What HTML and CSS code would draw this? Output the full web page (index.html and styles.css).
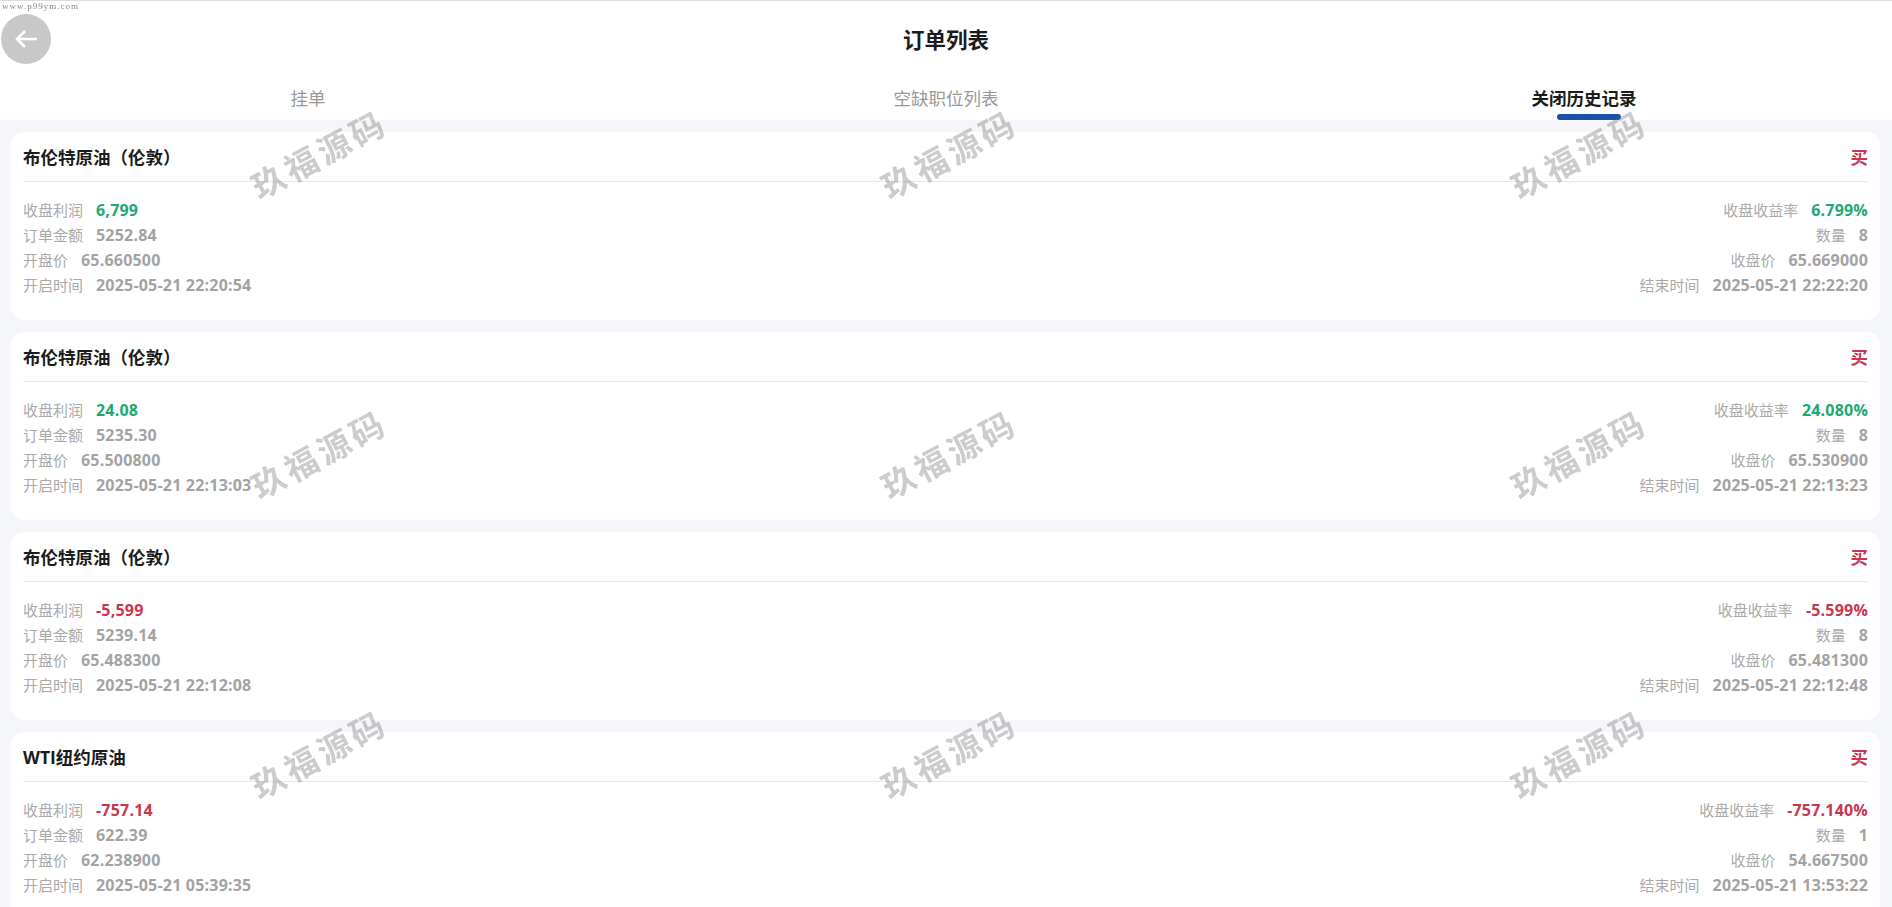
FILE: index.html
```html
<!DOCTYPE html>
<html lang="zh-CN">

<head>
  <meta charset="UTF-8">
  <title>订单列表</title>
  <link rel="stylesheet" href="styles.css">
</head>

<body>
  <div class="site-mark">www.p99ym.com</div>
  <header class="top">
    <div class="title-bar">
      <a class="back" href="#">
        <svg width="22" height="18" viewBox="0 0 22 18" fill="none" stroke="#fff" stroke-width="2.5">
          <path d="M22 9H2M10 1L2 9l8 8" />
        </svg>
      </a>
      <h1>订单列表</h1>
    </div>
    <nav class="tabs">
      <a href="#">挂单</a>
      <a href="#">空缺职位列表</a>
      <a href="#" class="active">关闭历史记录</a>
    </nav>
  </header>

  <main class="orders">
    <section class="order">
      <div class="order-head"><h3>布伦特原油（伦敦）</h3><span class="side">买</span></div>
      <div class="order-body">
        <div class="col">
          <p>收盘利润<b class="up">6,799</b></p>
          <p>订单金额<b>5252.84</b></p>
          <p>开盘价<b>65.660500</b></p>
          <p>开启时间<b>2025-05-21 22:20:54</b></p>
        </div>
        <div class="col right">
          <p>收盘收益率<b class="up">6.799%</b></p>
          <p>数量<b>8</b></p>
          <p>收盘价<b>65.669000</b></p>
          <p>结束时间<b>2025-05-21 22:22:20</b></p>
        </div>
      </div>
    </section>
    <section class="order">
      <div class="order-head"><h3>布伦特原油（伦敦）</h3><span class="side">买</span></div>
      <div class="order-body">
        <div class="col">
          <p>收盘利润<b class="up">24.08</b></p>
          <p>订单金额<b>5235.30</b></p>
          <p>开盘价<b>65.500800</b></p>
          <p>开启时间<b>2025-05-21 22:13:03</b></p>
        </div>
        <div class="col right">
          <p>收盘收益率<b class="up">24.080%</b></p>
          <p>数量<b>8</b></p>
          <p>收盘价<b>65.530900</b></p>
          <p>结束时间<b>2025-05-21 22:13:23</b></p>
        </div>
      </div>
    </section>
    <section class="order">
      <div class="order-head"><h3>布伦特原油（伦敦）</h3><span class="side">买</span></div>
      <div class="order-body">
        <div class="col">
          <p>收盘利润<b class="down">-5,599</b></p>
          <p>订单金额<b>5239.14</b></p>
          <p>开盘价<b>65.488300</b></p>
          <p>开启时间<b>2025-05-21 22:12:08</b></p>
        </div>
        <div class="col right">
          <p>收盘收益率<b class="down">-5.599%</b></p>
          <p>数量<b>8</b></p>
          <p>收盘价<b>65.481300</b></p>
          <p>结束时间<b>2025-05-21 22:12:48</b></p>
        </div>
      </div>
    </section>
    <section class="order">
      <div class="order-head"><h3>WTI纽约原油</h3><span class="side">买</span></div>
      <div class="order-body">
        <div class="col">
          <p>收盘利润<b class="down">-757.14</b></p>
          <p>订单金额<b>622.39</b></p>
          <p>开盘价<b>62.238900</b></p>
          <p>开启时间<b>2025-05-21 05:39:35</b></p>
        </div>
        <div class="col right">
          <p>收盘收益率<b class="down">-757.140%</b></p>
          <p>数量<b>1</b></p>
          <p>收盘价<b>54.667500</b></p>
          <p>结束时间<b>2025-05-21 13:53:22</b></p>
        </div>
      </div>
    </section>
  </main>

  <div class="watermarks">
    <span>玖福源码</span><span>玖福源码</span><span>玖福源码</span>
    <span>玖福源码</span><span>玖福源码</span><span>玖福源码</span>
    <span>玖福源码</span><span>玖福源码</span><span>玖福源码</span>
  </div>
</body>

</html>
```

FILE: styles.css
```css
html,
body {
  margin: 0;
  padding: 0;
  height: 100%;
  overflow: hidden;
  background-color: #f5f6fa;
  font-family: 'Open Sans', 'Noto Sans CJK SC', sans-serif;
  color: #1c1c1c;
}

.site-mark {
  position: absolute;
  top: 1px;
  left: 2px;
  font-family: 'Liberation Serif', serif;
  font-size: 9px;
  letter-spacing: 1px;
  color: #888;
  z-index: 3;
}

.top {
  height: 119px;
  background-color: #fff;
  border-top: 1px solid #ddd;
}

.title-bar {
  height: 74px;
  padding-bottom: 2px;
  display: flex;
  align-items: center;
  justify-content: center;
  position: relative;
}

.title-bar h1 {
  margin: 0;
  font-size: 21.5px;
  font-weight: 700;
}

.back {
  position: absolute;
  top: 13px;
  left: 1px;
  width: 50px;
  height: 50px;
  border-radius: 50%;
  background-color: #c8c8c8;
  display: flex;
  align-items: center;
  justify-content: center;
}

.tabs {
  display: grid;
  grid-template-columns: repeat(3, 638px);
  justify-content: center;
  height: 43px;
}

.tabs a {
  position: relative;
  padding-top: 9px;
  text-align: center;
  text-decoration: none;
  color: #999;
  font-size: 17.5px;
  line-height: 24px;
}

.tabs a.active {
  color: #1c1c1c;
  font-weight: 700;
}

.tabs a.active::after {
  content: '';
  position: absolute;
  left: 50%;
  bottom: 0;
  width: 64px;
  height: 6px;
  margin-left: -27px;
  border-radius: 3px;
  background-color: #1a4fa8;
}

.orders {
  padding: 12px 12px 0 11px;
  display: flex;
  flex-direction: column;
  gap: 12px;
}

.order {
  height: 188px;
  flex-shrink: 0;
  box-sizing: border-box;
  padding: 0 12px;
  background-color: #fff;
  border-radius: 14px;
}

.order-head {
  height: 49px;
  display: flex;
  align-items: center;
  justify-content: space-between;
  border-bottom: 1px solid #e8e8e8;
}

.order-head h3 {
  margin: 0;
  font-size: 17.5px;
  font-weight: 700;
}

.side {
  color: #c9374f;
  font-size: 17.5px;
  font-weight: 700;
}

.order-body {
  display: flex;
  justify-content: space-between;
  padding-top: 16px;
}

.col p {
  margin: 0;
  height: 25px;
  line-height: 25px;
  font-size: 15px;
  color: #aaa;
  white-space: nowrap;
}

.col.right {
  text-align: right;
}

.col b {
  margin-left: 13px;
  font-size: 16px;
  letter-spacing: 0.2px;
  font-weight: 700;
  color: #a3a3a3;
}

.col b.up {
  color: #1fa872;
}

.col b.down {
  color: #c9374f;
}

.watermarks {
  position: fixed;
  top: 0;
  left: 0;
  display: grid;
  grid-template-columns: repeat(3, 630px);
  grid-auto-rows: 300px;
  padding: 105px 0 0 4px;
  pointer-events: none;
  z-index: 2;
}

.watermarks span {
  justify-self: center;
  width: 253px;
  height: 100px;
  text-align: center;
  line-height: 100px;
  font-size: 33px;
  font-weight: 700;
  letter-spacing: 4px;
  color: rgba(120, 120, 120, 0.38);
  transform: rotate(-28deg);
}
```
